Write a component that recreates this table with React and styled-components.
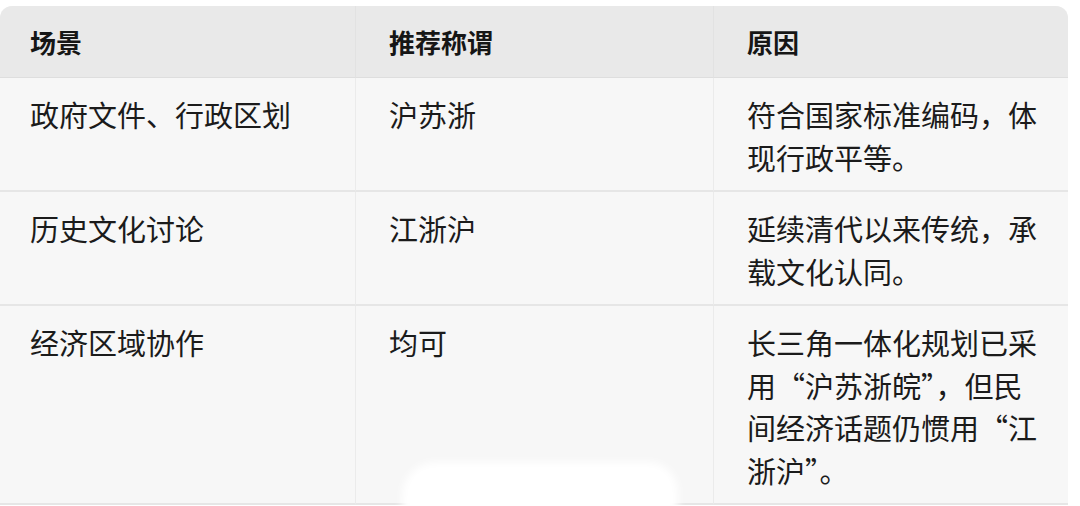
import React from 'react';
import styled, { createGlobalStyle } from 'styled-components';

const GlobalStyle = createGlobalStyle`
  html, body {
    margin: 0;
    padding: 0;
    background: #ffffff;
  }
  body {
    font-family: "Noto Sans CJK SC", "Noto Sans", sans-serif;
    color: #1b1b1b;
  }
`;

const Page = styled.div`
  position: relative;
  width: 1080px;
  height: 506px;
  padding-top: 6px;
  box-sizing: border-box;
  overflow: hidden;
`;

const Table = styled.div`
  width: 1068px;
  display: grid;
  grid-template-columns: 355px 358px 355px;
  border-radius: 12px 12px 0 0;
  overflow: hidden;
  background: #f7f7f7;
`;

const HeadCell = styled.div`
  height: 72px;
  display: flex;
  align-items: center;
  padding-left: ${p => p.$pad}px;
  background: #e9e9e9;
  font-size: 26px;
  font-weight: 700;
  color: #161616;
  border-left: ${p => (p.$first ? 'none' : '1px solid #e2e2e2')};
  border-bottom: 1px solid #dedede;
  box-sizing: border-box;
`;

const Cell = styled.div`
  padding: 15px ${p => p.$padRight}px 12px ${p => p.$pad}px;
  font-size: 29px;
  line-height: 42.5px;
  color: #1b1b1b;
  border-left: ${p => (p.$first ? 'none' : '1px solid #ebebeb')};
  border-bottom: 2px solid #e6e6e6;
  box-sizing: border-box;
  word-break: break-all;
`;

const Smudge = styled.div`
  position: absolute;
  left: 402px;
  top: 462px;
  width: 276px;
  height: 60px;
  background: #ffffff;
  border-radius: 34px 30px 0 0;
  filter: blur(4px);
`;

const columns = [
  { title: '场景', pad: 30 },
  { title: '推荐称谓', pad: 33 },
  { title: '原因', pad: 33 },
];

const rows = [
  ['政府文件、行政区划', '沪苏浙', '符合国家标准编码，体现行政平等。'],
  ['历史文化讨论', '江浙沪', '延续清代以来传统，承载文化认同。'],
  ['经济区域协作', '均可', '长三角一体化规划已采用“沪苏浙皖”，但民间经济话题仍惯用“江浙沪”。'],
];

export default function App() {
  return (
    <Page>
      <GlobalStyle />
      <Table>
        {columns.map((c, i) => (
          <HeadCell key={c.title} $pad={c.pad} $first={i === 0}>
            {c.title}
          </HeadCell>
        ))}
        {rows.map((r, ri) =>
          r.map((text, ci) => (
            <Cell
              key={`${ri}-${ci}`}
              $pad={columns[ci].pad}
              $padRight={ci === 2 ? 24 : 20}
              $first={ci === 0}
            >
              {text}
            </Cell>
          ))
        )}
      </Table>
      <Smudge />
    </Page>
  );
}
